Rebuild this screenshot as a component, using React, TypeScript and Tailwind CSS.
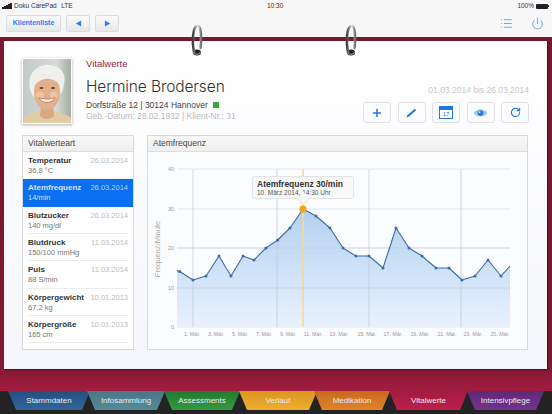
import React from 'react';
import { List, Power, Plus, RotateCw } from 'lucide-react';

const vitals = [
  { name: 'Temperatur', value: '36,8 °C', date: '26.03.2014' },
  { name: 'Atemfrequenz', value: '14/min', date: '26.03.2014', active: true },
  { name: 'Blutzucker', value: '140 mg/dl', date: '26.03.2014' },
  { name: 'Blutdruck', value: '150/100 mmHg', date: '11.03.2014' },
  { name: 'Puls', value: '88 S/min', date: '11.03.2014' },
  { name: 'Körpergewicht', value: '67,2 kg', date: '10.01.2013' },
  { name: 'Körpergröße', value: '165 cm', date: '10.01.2013' },
];

const tabs = [
  { label: 'Stammdaten', cls: 'w-[82px] ml-[8px] bg-gradient-to-b from-[#244f80] to-[#33659a]' },
  { label: 'Infosammlung', cls: 'w-[78px] ml-[-3px] bg-gradient-to-b from-[#4a7688] to-[#568a98]' },
  { label: 'Assessments', cls: 'w-[76px] ml-[-1px] bg-gradient-to-b from-[#227a30] to-[#359a40]' },
  { label: 'Verlauf', cls: 'w-[78px] ml-[-1px] bg-gradient-to-b from-[#dc951f] to-[#eeae30]' },
  { label: 'Medikation', cls: 'w-[76px] ml-[-3px] bg-gradient-to-b from-[#c96a1c] to-[#e08428]' },
  { label: 'Vitalwerte', cls: 'w-[79px] ml-[-1px] bg-gradient-to-b from-[#a31b3e] to-[#bd204b]' },
  { label: 'Intensivpflege', cls: 'w-[77px] ml-[-1px] bg-gradient-to-b from-[#5e2a78] to-[#74338c]' },
];

const points: [number, number][] = [
  [179.6, 272.5], [193, 281], [206, 277], [219, 257], [231, 277], [243, 257], [254, 261], [266, 249],
  [277.7, 241], [290, 229], [303, 210], [316, 217], [330, 229], [343, 249], [356, 257], [369, 257],
  [383, 269], [396, 229], [409, 249], [422, 257], [436, 269], [449, 269], [462, 281], [475, 277],
  [488, 261], [501, 277],
];

const xLabels: [string, number][] = [
  ['1. Mär.', 192], ['3. Mär.', 216], ['5. Mär.', 240], ['7. Mär.', 264], ['9. Mär.', 288], ['11. Mär.', 313],
  ['13. Mär.', 339], ['15. Mär.', 367], ['17. Mär.', 393], ['19. Mär.', 420], ['21. Mär.', 447], ['23. Mär.', 473], ['25. Mär.', 500],
];

function Chart() {
  const line = 'M177 271.5 L' + points.map((p) => p.join(' ')).join(' L') + ' L510 267';
  const area = line + ' L510 328 L177 328 Z';
  return (
    <svg viewBox="148 153 379 196" className="block w-[379px] h-[196px]">
      <defs>
        <linearGradient id="area" x1="0" y1="0" x2="0" y2="1">
          <stop offset="0" stopColor="#b3d0f0" />
          <stop offset="1" stopColor="#e8f2fe" />
        </linearGradient>
      </defs>
      {[170, 210, 249, 289, 328].map((y, i) => (
        <g key={y}>
          <line x1="178" x2="510" y1={y} y2={y} stroke="#dfe1e6" strokeWidth="0.8" />
          <text x="174" y={y + 2} textAnchor="end" fontSize="5.5" fill="#999">{40 - i * 10}</text>
        </g>
      ))}
      <path d={area} fill="url(#area)" />
      <line x1="177" x2="510" y1="249" y2="249" stroke="#b8c4d4" strokeWidth="0.6" opacity="0.7" />
      <line x1="177" x2="510" y1="289" y2="289" stroke="#b8c4d4" strokeWidth="0.7" opacity="0.7" />
      {[193, 277, 369, 461].map((x) => (
        <line key={x} x1={x} x2={x} y1="170" y2="328" stroke="#c3ccd9" strokeWidth="0.8" />
      ))}
      <line x1="303" x2="303" y1="170" y2="328" stroke="#f6d992" strokeWidth="1.6" />
      <path d={line} fill="none" stroke="#3a6da6" strokeWidth="1.1" strokeLinejoin="round" />
      {points.map((p) => (
        <circle key={p[0]} cx={p[0]} cy={p[1]} r="1.5" fill="#3a6da6" />
      ))}
      <circle cx="303" cy="210" r="3.6" fill="#f6a511" />
      {xLabels.map(([t, x]) => (
        <text key={t} x={x} y="337" textAnchor="middle" fontSize="5.3" fill="#999">{t}</text>
      ))}
      <text transform="translate(160 250) rotate(-90)" textAnchor="middle" fontSize="7.5" fill="#aaa">Frequenz/Minute</text>
    </svg>
  );
}

function Portrait() {
  return (
    <svg viewBox="0 0 48 64" className="block w-[48px] h-[64px]">
      <defs>
        <filter id="soft"><feGaussianBlur stdDeviation="0.7" /></filter>
        <linearGradient id="bg" x1="0" y1="0" x2="1" y2="0">
          <stop offset="0" stopColor="#c4cacb" />
          <stop offset="0.7" stopColor="#d6d9d7" />
          <stop offset="1" stopColor="#a3ad9f" />
        </linearGradient>
      </defs>
      <rect width="48" height="64" fill="url(#bg)" />
      <g filter="url(#soft)">
        <path d="M0 66 L0 60 C4 55 10 54 16 52 L32 52 C38 54 44 56 50 60 L50 66 Z" fill="#e2cda0" />
        <path d="M18 46 L30 46 L31 57 C27 61 21 61 17 57 Z" fill="#d8a884" />
        <path d="M7 30 C4 14 14 6 24 6 C36 6 44 13 41 25 C40 31 39 34 37 35 L11 38 C9 36 8 34 7 30 Z" fill="#f0efed" />
        <ellipse cx="24" cy="33" rx="13" ry="18" fill="#e2b18c" />
        <ellipse cx="17" cy="36" rx="4" ry="3.5" fill="#eec3a3" />
        <ellipse cx="31" cy="36" rx="4" ry="3.5" fill="#eec3a3" />
        <path d="M11 27 C13 18 20 14 30 15 C35 17 37 21 38 27 C33 21 27 19 22 20 C17 21 13 24 11 27 Z" fill="#f1efec" />
        <ellipse cx="18.5" cy="29" rx="2" ry="0.9" fill="#5f4033" />
        <ellipse cx="30" cy="29" rx="2" ry="0.9" fill="#5f4033" />
        <path d="M16 38.5 C20 40.5 28 40.5 32 38.5 C30 45 18 45 16 38.5 Z" fill="#fbf3ee" stroke="#b96a58" strokeWidth="0.7" />
      </g>
    </svg>
  );
}

function Ring() {
  return (
    <svg viewBox="0 0 14 33" className="block w-[14px] h-[33px]">
      <defs>
        <linearGradient id="silver" x1="0" y1="0" x2="1" y2="0">
          <stop offset="0" stopColor="#3d3d3d" />
          <stop offset="0.3" stopColor="#8d8d8d" />
          <stop offset="0.6" stopColor="#eeeeee" />
          <stop offset="1" stopColor="#6d6d6d" />
        </linearGradient>
      </defs>
      <ellipse cx="7" cy="28.5" rx="4" ry="3" fill="#222" />
      <path d="M4 28 C2 18 2.5 3 7.5 2 C11.5 1.5 11.5 16 10.5 24" fill="none" stroke="url(#silver)" strokeWidth="2.6" strokeLinecap="round" />
      <path d="M3.5 28.5 C5 31 9 31 10.5 28" fill="none" stroke="#8b8b8b" strokeWidth="1.2" />
    </svg>
  );
}

function ActionButton({ children }: { children: React.ReactNode }) {
  return (
    <button className="w-[28px] h-[21px] flex items-center justify-center rounded-[3px] border border-[#dfe1e6] bg-[#fbfcfe] text-[#2477dc]">
      {children}
    </button>
  );
}

function NavButton({ children, cls }: { children: React.ReactNode; cls: string }) {
  return (
    <button className={`h-[17px] flex items-center justify-center rounded-[2px] border border-[#dcdcdc] bg-gradient-to-b from-[#fbfbfb] to-[#e6e7e9] text-[#2880ee] ${cls}`}>
      {children}
    </button>
  );
}

export default function App() {
  return (
    <div className="relative w-[552px] h-[414px] overflow-hidden flex flex-col bg-[#232323] font-['Liberation_Sans',Arial,sans-serif]">
      {/* status + toolbar */}
      <div className="h-[37px] bg-[#f7f7f8] flex flex-col shrink-0">
        <div className="h-[12px] px-[2px] relative flex items-center justify-between text-[6.5px] text-[#333]">
          <div className="flex items-center gap-[1.5px]">
            <span className="flex items-end gap-[0.5px] mr-[1px]">
              <i className="block w-[1.5px] h-[1.5px] bg-[#222]" />
              <i className="block w-[1.5px] h-[2.5px] bg-[#222]" />
              <i className="block w-[1.5px] h-[3.5px] bg-[#222]" />
              <i className="block w-[1.5px] h-[4.5px] bg-[#222]" />
              <i className="block w-[1.5px] h-[5.5px] bg-[#222]" />
            </span>
            <span>Doku CarePad</span>
            <span className="ml-[3px]">LTE</span>
          </div>
          <span className="absolute left-[267px]">10:30</span>
          <div className="flex items-center gap-[2px] pr-[1px]">
            <span>100%</span>
            <span className="w-[12px] h-[5px] bg-[#222] rounded-[1px]" />
            <span className="w-[1px] h-[2px] bg-[#222] ml-[-2px]" />
          </div>
        </div>
        <div className="flex items-center pl-[6px] pr-[8px] mt-[3px]">
          <NavButton cls="w-[55px] text-[7px] font-bold">Klientenliste</NavButton>
          <NavButton cls="w-[24px] ml-[5px]">
            <svg viewBox="0 0 8 8" className="w-[7px] h-[7px]"><path d="M7 0.5 V7.5 L1 4 Z" fill="currentColor" /></svg>
          </NavButton>
          <NavButton cls="w-[24px] ml-[5px]">
            <svg viewBox="0 0 8 8" className="w-[7px] h-[7px]"><path d="M1 0.5 V7.5 L7 4 Z" fill="currentColor" /></svg>
          </NavButton>
          <div className="ml-auto flex items-center gap-[18px] text-[#3d8de8]">
            <List size={13} strokeWidth={1.4} />
            <Power size={13} strokeWidth={1.4} />
          </div>
        </div>
      </div>

      {/* binder frame */}
      <div className="h-[354px] shrink-0 pt-[4px] pl-[4px] pr-[5px] bg-gradient-to-b from-[#781830] via-[#7e1832] via-[92%] to-[#a31c40]">
        <div className="h-[328px] pt-[17px] pl-[18px] pr-[18px] bg-gradient-to-b from-white to-[#f5f6fb] shadow-[1px_1px_1px_rgba(0,0,0,0.4)]">
          <div className="flex h-[77px]">
            <div className="w-[50px] h-[66px] p-[1px] bg-white shadow-[0_1px_3px_rgba(0,0,0,0.3)] shrink-0">
              <Portrait />
            </div>
            <div className="ml-[14px] flex flex-col">
              <span className="text-[9.5px] leading-[10px] mt-[1px] text-[#8c2742]">Vitalwerte</span>
              <span className="text-[15.5px] leading-[24px] mt-[6px] text-[#333] font-['Inter'] font-light tracking-[-0.1px]">Hermine Brodersen</span>
              <span className="text-[8.5px] leading-[10px] mt-[1px] text-[#444] flex items-center">
                Dorfstraße 12 | 30124 Hannover
                <i className="block w-[6px] h-[6px] ml-[5px] bg-[#3aa53f]" />
              </span>
              <span className="text-[8.5px] leading-[10px] mt-[1px] text-[#bbb]">Geb.-Datum: 28.02.1932 | Klient-Nr.: 31</span>
            </div>
            <div className="ml-auto flex flex-col items-end">
              <span className="text-[8.5px] leading-[10px] mt-[27px] text-[#c8c8c8]">01.03.2014 bis 26.03.2014</span>
              <div className="flex gap-[6.5px] mt-[7px]">
                <ActionButton><Plus size={12} strokeWidth={3} /></ActionButton>
                <ActionButton>
                  <svg viewBox="0 0 14 14" className="w-[13px] h-[13px]"><path d="M1.5 12.5 L2.5 10 L10.5 3 L12 4.5 L4 11.5 Z" fill="currentColor" /></svg>
                </ActionButton>
                <ActionButton>
                  <div className="relative w-[14px] h-[13px] border border-[#2477dc] bg-white">
                    <div className="h-[3px] bg-[#2477dc]" />
                    <span className="block text-center text-[6px] leading-[8px] text-[#2477dc]">17</span>
                  </div>
                </ActionButton>
                <ActionButton>
                  <svg viewBox="0 0 16 10" className="w-[15px] h-[10px]">
                    <path d="M0.5 5 C4 0 12 0 15.5 5 C12 10 4 10 0.5 5 Z" fill="#9cc4ee" />
                    <circle cx="8" cy="5" r="3" fill="#2477dc" />
                    <circle cx="7" cy="4" r="1" fill="#fff" />
                  </svg>
                </ActionButton>
                <ActionButton><RotateCw size={11} strokeWidth={2.4} /></ActionButton>
              </div>
            </div>
          </div>

          <div className="flex h-[215px] gap-[13px]">
            {/* list */}
            <div className="w-[112px] h-full border border-[#d9d9dc] bg-white shrink-0">
              <div className="h-[16px] px-[5px] flex items-center text-[8.5px] text-[#444] bg-gradient-to-b from-[#f8f8f8] to-[#efefef] border-b border-[#dddddd]">Vitalwerteart</div>
              {vitals.map((v) => (
                <div key={v.name} className={`h-[27.33px] px-[5px] ${v.active ? 'bg-[#0a6ff0]' : ''}`}>
                  <div className={`h-full pt-[4px] ${v.active ? '' : 'border-b border-[#ececec]'}`}>
                    <div className="flex justify-between items-center leading-[10px]">
                      <span className={`text-[8px] font-bold ${v.active ? 'text-[#d5e6fc]' : 'text-[#333]'}`}>{v.name}</span>
                      <span className={`text-[7.5px] ${v.active ? 'text-[#b5d3f8]' : 'text-[#bbb]'}`}>{v.date}</span>
                    </div>
                    <div className={`text-[7.5px] leading-[10px] ${v.active ? 'text-[#cfe2fb]' : 'text-[#777]'}`}>{v.value}</div>
                  </div>
                </div>
              ))}
            </div>
            {/* chart */}
            <div className="w-[381px] h-full border border-[#d9d9dc] bg-[#fbfcfe]">
              <div className="h-[16px] px-[5px] flex items-center text-[8.5px] text-[#444] bg-gradient-to-b from-[#f8f8f8] to-[#efefef] border-b border-[#dddddd]">Atemfrequenz</div>
              <div className="relative">
                <Chart />
                <div className="absolute left-[104px] top-[24px] w-[102px] h-[23px] rounded-[3px] border border-[#e4e4e6] bg-[#f8f8f9] pl-[4px] pt-[2px]">
                  <div className="text-[8.5px] leading-[10px] font-bold text-[#333]">Atemfrequenz 30/min</div>
                  <div className="text-[6.5px] leading-[8px] text-[#555]">10. März 2014, 14:30 Uhr</div>
                  <div className="absolute left-[46px] bottom-[-5px] w-[9px] h-[9px] rotate-45 bg-[#f8f8f9] border-r border-b border-[#e4e4e6]" />
                </div>
              </div>
            </div>
          </div>
        </div>
      </div>

      {/* rings */}
      <div className="absolute left-[190px] top-[24px]"><Ring /></div>
      <div className="absolute left-[344px] top-[24px]"><Ring /></div>

      {/* tabs */}
      <div className="h-[19px] flex shrink-0">
        {tabs.map((t) => (
          <div key={t.label} className={`h-full shrink-0 flex items-center justify-center text-[8px] text-[#e8edf2] [clip-path:polygon(0_0,100%_0,calc(100%-8px)_100%,8px_100%)] ${t.cls}`}>
            {t.label}
          </div>
        ))}
      </div>
    </div>
  );
}
